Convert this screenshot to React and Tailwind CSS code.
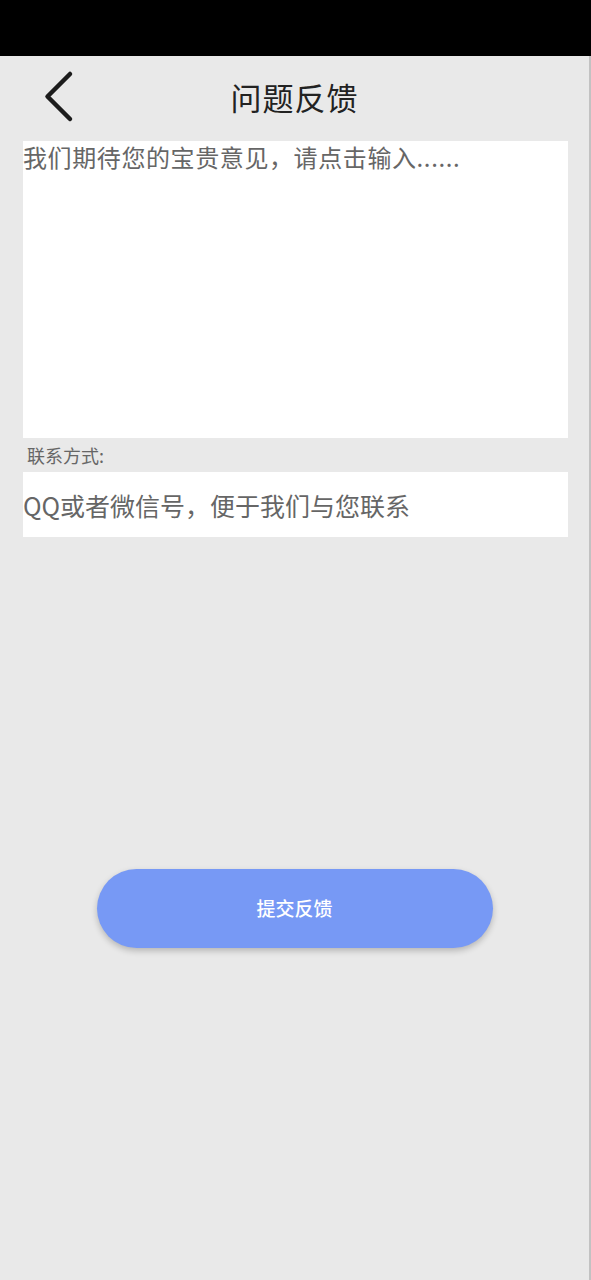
import React from 'react';

const BackIcon = () => (
  <svg width="40" height="56" viewBox="0 0 40 56" fill="none">
    <path d="M32 4 L9.5 26.5 L32 49" stroke="#1c1c1c" strokeWidth="4.5" strokeLinecap="round" strokeLinejoin="round" />
  </svg>
);

const App = () => {
  return (
    <div className="min-h-[1280px] flex flex-col bg-[#e9e9e9] font-['Noto_Sans_CJK_SC','Noto_Sans',sans-serif]">
      <div className="h-14 bg-black" />
      <div className="flex-1 flex flex-col border-r-2 border-[#c2c2c2]">
        <header className="relative h-[85px] flex items-center justify-center">
          <button className="absolute left-[38px] top-[14px]">
            <BackIcon />
          </button>
          <h1 className="text-[31px] leading-none tracking-[1px] text-[#222] -mt-[5px]">问题反馈</h1>
        </header>

        <div className="ml-[23px] mr-[21px] flex flex-col">
          <textarea
            className="h-[297px] bg-white resize-none outline-none text-[24px] leading-8 tracking-[0.6px] text-[#555] placeholder:text-[#666]"
            placeholder="我们期待您的宝贵意见，请点击输入......"
          />
          <div className="h-[34px] flex items-center pl-1 text-[18px] text-[#666]">联系方式:</div>
          <input
            className="h-[65px] bg-white outline-none text-[25px] text-[#555] placeholder:text-[#666]"
            placeholder="QQ或者微信号，便于我们与您联系"
          />
        </div>

        <div className="flex justify-center mt-[332px]">
          <button className="w-[396px] h-[79px] rounded-full bg-[#7799f5] text-white text-[19px] font-medium shadow-[0_3px_6px_rgba(0,0,0,0.22)]">
            提交反馈
          </button>
        </div>
      </div>
    </div>
  );
};

export default App;
